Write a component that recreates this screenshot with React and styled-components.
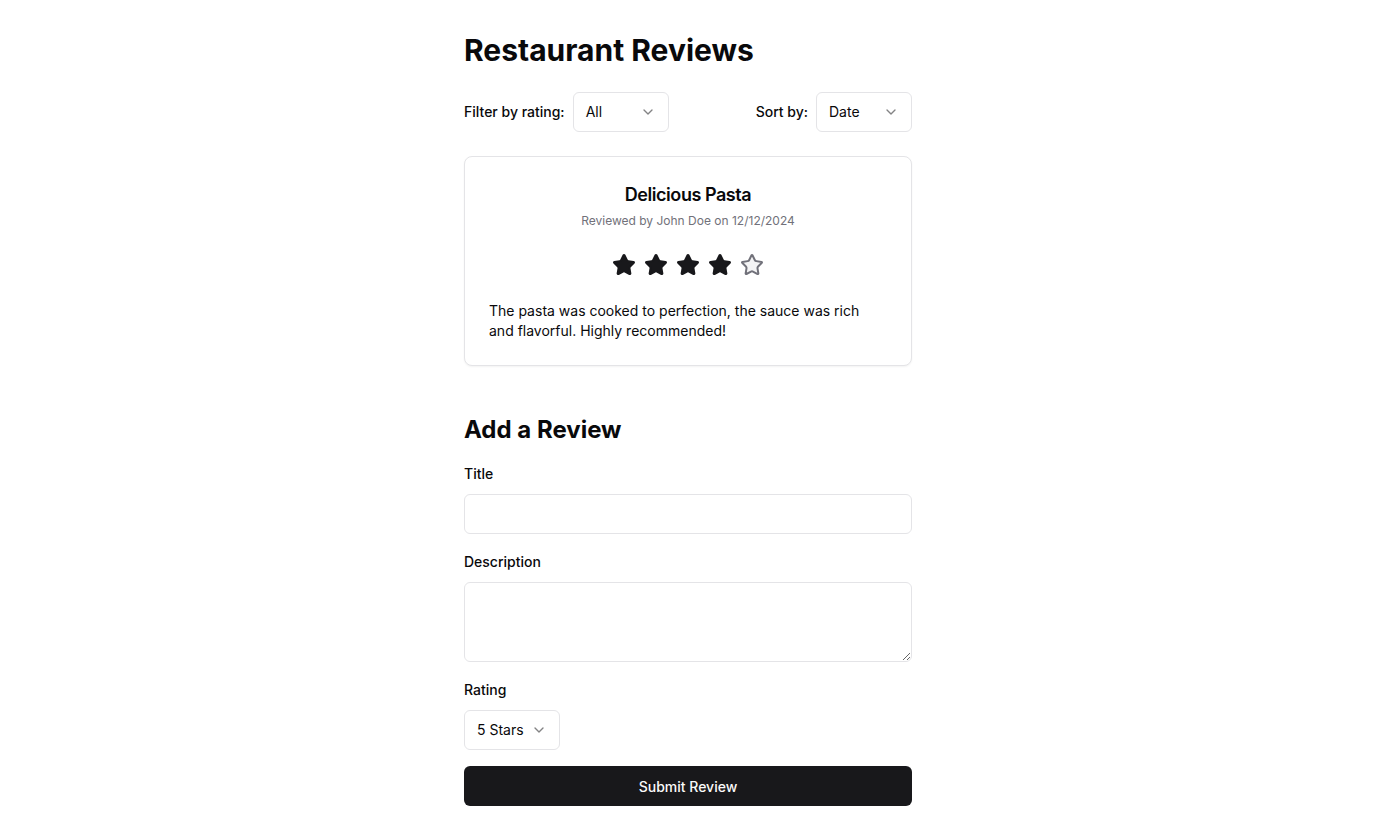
import React from "react";
import styled, { createGlobalStyle } from "styled-components";
import { Star, ChevronDown } from "lucide-react";

const Global = createGlobalStyle`
  * { box-sizing: border-box; }
  body {
    margin: 0;
    background: #ffffff;
    color: #09090b;
    font-family: Inter, "Noto Sans", sans-serif;
    -webkit-font-smoothing: antialiased;
  }
`;

const Page = styled.main`
  max-width: 448px;
  margin: 0 auto;
  padding: 32px 0;
`;

const Heading = styled.h1`
  font-size: 30px;
  line-height: 36px;
  font-weight: 700;
  margin: 0 0 24px;
`;

const SubHeading = styled.h2`
  font-size: 24px;
  line-height: 32px;
  font-weight: 700;
  margin: 48px 0 18px;
`;

const Toolbar = styled.div`
  display: flex;
  justify-content: space-between;
  align-items: center;
  margin-bottom: 24px;
`;

const ToolGroup = styled.div`
  display: flex;
  align-items: center;
  gap: 8px;
`;

const Label = styled.label`
  display: block;
  font-size: 14px;
  line-height: 20px;
  font-weight: 500;
`;

const SelectBox = styled.button`
  display: flex;
  align-items: center;
  justify-content: space-between;
  width: ${(p) => p.$width || 96}px;
  height: 40px;
  padding: 0 12px;
  border: 1px solid #e4e4e7;
  border-radius: 6px;
  background: #fff;
  font-family: inherit;
  font-size: 14px;
  line-height: 20px;
  color: #09090b;
  cursor: pointer;
  span { margin-top: -1px; }
  svg { opacity: 0.5; }
`;

const Card = styled.article`
  border: 1px solid #e4e4e7;
  border-radius: 8px;
  background: #fff;
  box-shadow: 0 1px 2px rgba(0, 0, 0, 0.05);
`;

const CardHeader = styled.header`
  padding: 24px;
  text-align: center;
  display: flex;
  flex-direction: column;
  gap: 4px;
`;

const CardTitle = styled.h3`
  margin: 0;
  font-size: 18px;
  line-height: 28px;
  font-weight: 600;
  letter-spacing: -0.025em;
`;

const CardMeta = styled.p`
  margin: 0;
  font-size: 12px;
  line-height: 16px;
  color: #71717a;
`;

const CardBody = styled.div`
  padding: 0 24px 24px;
`;

const Stars = styled.div`
  display: flex;
  justify-content: center;
  gap: 8px;
  margin-bottom: 24px;
`;

const ReviewText = styled.p`
  margin: 0;
  font-size: 14px;
  line-height: 20px;
  color: #09090b;
`;

const Form = styled.form`
  display: flex;
  flex-direction: column;
  gap: 18px;
`;

const Field = styled.div`
  display: flex;
  flex-direction: column;
  align-items: flex-start;
  gap: 10px;
`;

const TextInput = styled.input`
  width: 100%;
  height: 40px;
  padding: 8px 12px;
  border: 1px solid #e4e4e7;
  border-radius: 6px;
  font-family: inherit;
  font-size: 14px;
  outline: none;
`;

const TextArea = styled.textarea`
  display: block;
  width: 100%;
  height: 80px;
  padding: 8px 12px;
  border: 1px solid #e4e4e7;
  border-radius: 6px;
  font-family: inherit;
  font-size: 14px;
  resize: vertical;
  outline: none;
`;

const SubmitButton = styled.button`
  width: 100%;
  height: 40px;
  margin-top: -2px;
  border: none;
  border-radius: 6px;
  background: #18181b;
  color: #fafafa;
  font-family: inherit;
  font-size: 14px;
  font-weight: 500;
  cursor: pointer;
`;

function Select({ value, width }) {
  return (
    <SelectBox type="button" $width={width}>
      <span>{value}</span>
      <ChevronDown size={16} strokeWidth={2} />
    </SelectBox>
  );
}

function Rating({ value }) {
  return (
    <Stars>
      {[1, 2, 3, 4, 5].map((i) => (
        <Star
          key={i}
          size={24}
          strokeWidth={2}
          color={i <= value ? "#18181b" : "#71717a"}
          fill={i <= value ? "#18181b" : "#f4f4f5"}
        />
      ))}
    </Stars>
  );
}

export default function App() {
  return (
    <>
      <Global />
      <Page>
        <Heading>Restaurant Reviews</Heading>
        <Toolbar>
          <ToolGroup>
            <Label>Filter by rating:</Label>
            <Select value="All" />
          </ToolGroup>
          <ToolGroup>
            <Label>Sort by:</Label>
            <Select value="Date" />
          </ToolGroup>
        </Toolbar>

        <Card>
          <CardHeader>
            <CardTitle>Delicious Pasta</CardTitle>
            <CardMeta>Reviewed by John Doe on 12/12/2024</CardMeta>
          </CardHeader>
          <CardBody>
            <Rating value={4} />
            <ReviewText>
              The pasta was cooked to perfection, the sauce was rich and
              flavorful. Highly recommended!
            </ReviewText>
          </CardBody>
        </Card>

        <SubHeading>Add a Review</SubHeading>
        <Form onSubmit={(e) => e.preventDefault()}>
          <Field>
            <Label htmlFor="title">Title</Label>
            <TextInput id="title" />
          </Field>
          <Field>
            <Label htmlFor="desc">Description</Label>
            <TextArea id="desc" />
          </Field>
          <Field>
            <Label>Rating</Label>
            <Select value="5 Stars" />
          </Field>
          <SubmitButton type="submit">Submit Review</SubmitButton>
        </Form>
      </Page>
    </>
  );
}
